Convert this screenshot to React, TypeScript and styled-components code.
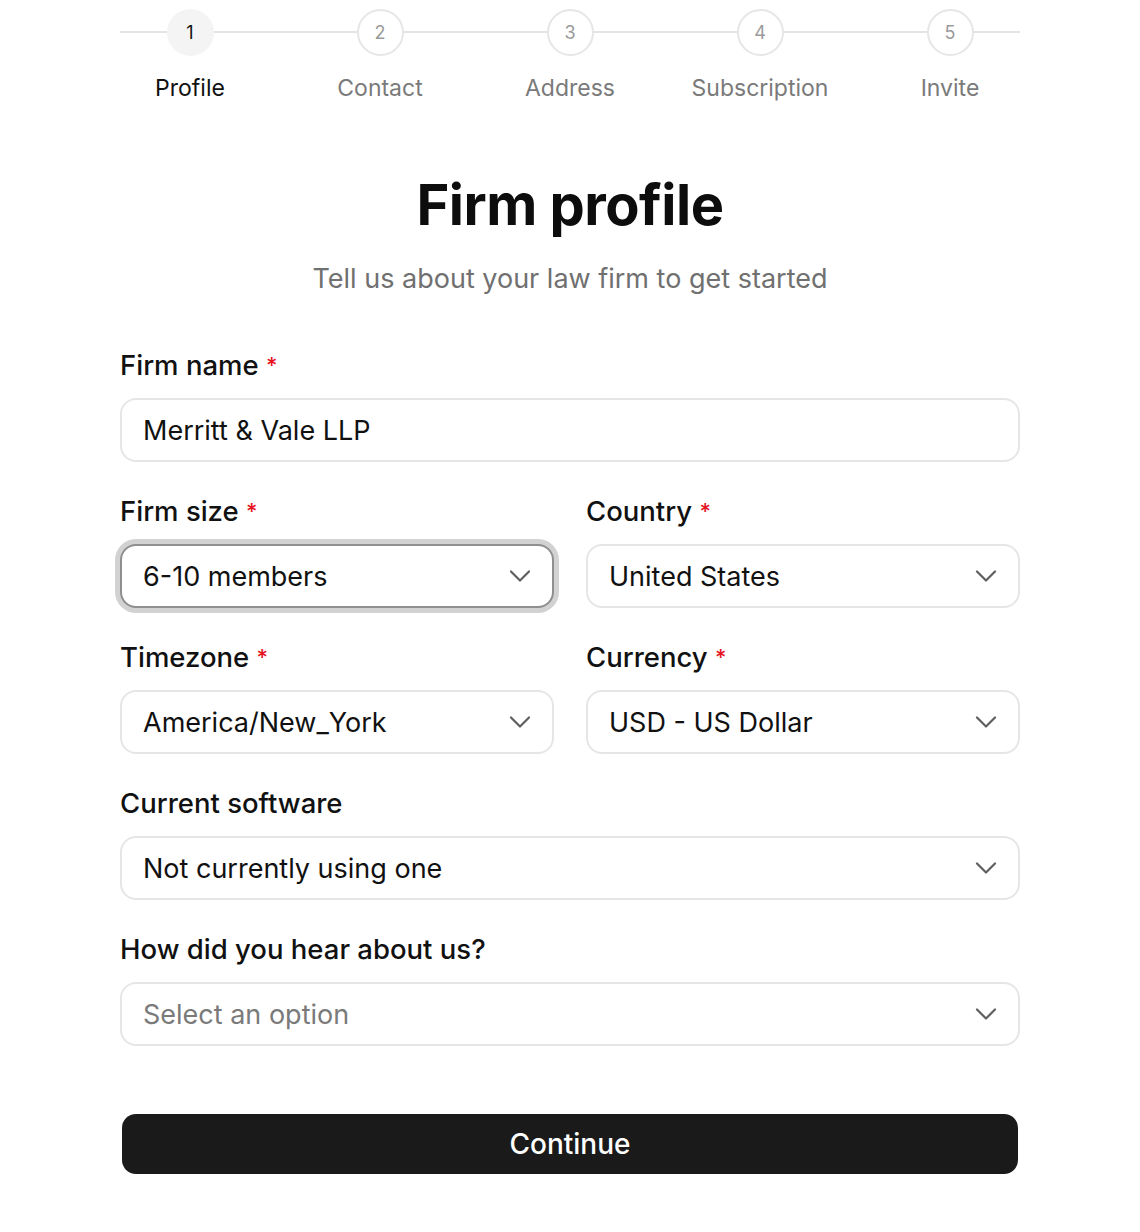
import React from 'react';
import styled, { createGlobalStyle } from 'styled-components';

const GlobalStyle = createGlobalStyle`
    body {
        margin: 0;
        background: #ffffff;
        font-family: Inter, "Noto Sans", sans-serif;
        color: #111111;
    }
`;

const steps = ['Profile', 'Contact', 'Address', 'Subscription', 'Invite'];

const Chevron = (): JSX.Element => (
    <svg width="22" height="12" viewBox="0 0 22 12" fill="none" stroke="#5f5f5f" strokeWidth="2.2" strokeLinecap="round" strokeLinejoin="round">
        <path d="M2 1.5l9 9 9-9" />
    </svg>
);

type SelectProps = { value: string; placeholder?: boolean; focused?: boolean };

const Select = ({ value, placeholder, focused }: SelectProps): JSX.Element => (
    <Field $focused={focused}>
        <FieldText $muted={placeholder}>{value}</FieldText>
        <Chevron />
    </Field>
);

const App = (): JSX.Element => {
    return (
        <>
            <GlobalStyle />
            <Page>
                <Stepper>
                    <Track />
                    {steps.map((label, i) => (
                        <Step key={label}>
                            <Circle $active={i === 0}>{i + 1}</Circle>
                            <StepLabel $active={i === 0}>{label}</StepLabel>
                        </Step>
                    ))}
                </Stepper>

                <Header>
                    <Title>Firm profile</Title>
                    <Subtitle>Tell us about your law firm to get started</Subtitle>
                </Header>

                <Form>
                    <Group>
                        <Label>Firm name <Req>*</Req></Label>
                        <Field>
                            <FieldText>Merritt &amp; Vale LLP</FieldText>
                        </Field>
                    </Group>

                    <Row>
                        <Group>
                            <Label>Firm size <Req>*</Req></Label>
                            <Select value="6-10 members" focused />
                        </Group>
                        <Group>
                            <Label>Country <Req>*</Req></Label>
                            <Select value="United States" />
                        </Group>
                    </Row>

                    <Row>
                        <Group>
                            <Label>Timezone <Req>*</Req></Label>
                            <Select value="America/New_York" />
                        </Group>
                        <Group>
                            <Label>Currency <Req>*</Req></Label>
                            <Select value="USD - US Dollar" />
                        </Group>
                    </Row>

                    <Group>
                        <Label>Current software</Label>
                        <Select value="Not currently using one" />
                    </Group>

                    <Group>
                        <Label>How did you hear about us?</Label>
                        <Select value="Select an option" placeholder />
                    </Group>
                </Form>

                <Button>Continue</Button>
            </Page>
        </>
    );
};

const Page = styled.div`
    width: 900px;
    margin: 0 auto;
    padding: 9px 0 58px;
`;

const Stepper = styled.div`
    position: relative;
    display: flex;
    justify-content: space-between;
`;

const Track = styled.div`
    position: absolute;
    left: 0;
    right: 0;
    top: 22px;
    height: 2px;
    background: #e4e4e4;
`;

const Step = styled.div`
    position: relative;
    width: 140px;
    display: flex;
    flex-direction: column;
    align-items: center;
    gap: 19px;
`;

const Circle = styled.div<{ $active?: boolean }>`
    width: 47px;
    height: 47px;
    box-sizing: border-box;
    border-radius: 50%;
    display: flex;
    align-items: center;
    justify-content: center;
    font-size: 18px;
    background: ${(p) => (p.$active ? '#f4f4f4' : '#ffffff')};
    border: 2px solid ${(p) => (p.$active ? '#f4f4f4' : '#e6e6e6')};
    color: ${(p) => (p.$active ? '#111' : '#9a9a9a')};
`;

const StepLabel = styled.div<{ $active?: boolean }>`
    font-size: 23px;
    line-height: 26px;
    color: ${(p) => (p.$active ? '#111' : '#7a7a7a')};
`;

const Header = styled.div`
    text-align: center;
    margin-top: 72px;
`;

const Title = styled.h1`
    margin: 0;
    font-size: 56px;
    line-height: 64px;
    font-weight: 700;
    letter-spacing: -0.5px;
    color: #0d0d0d;
`;

const Subtitle = styled.p`
    margin: 26px 0 0;
    font-size: 27px;
    line-height: 32px;
    color: #707070;
`;

const Form = styled.div`
    margin-top: 54px;
    display: flex;
    flex-direction: column;
    gap: 33px;
`;

const Row = styled.div`
    display: grid;
    grid-template-columns: 1fr 1fr;
    gap: 32px;
`;

const Group = styled.div`
    display: flex;
    flex-direction: column;
    gap: 17px;
`;

const Label = styled.label`
    font-size: 27.5px;
    line-height: 32px;
    font-weight: 500;
    color: #111;
`;

const Req = styled.span`
    color: #e5141f;
    font-size: 22px;
    vertical-align: top;
`;

const Field = styled.div<{ $focused?: boolean }>`
    height: 64px;
    box-sizing: border-box;
    display: flex;
    align-items: center;
    justify-content: space-between;
    padding: 0 21px 0 21px;
    border: 2px solid ${(p) => (p.$focused ? '#8f8f8f' : '#e6e6e6')};
    border-radius: 16px;
    background: #fff;
    box-shadow: ${(p) => (p.$focused ? '0 0 0 5px #d2d2d2' : 'none')};
`;

const FieldText = styled.span<{ $muted?: boolean }>`
    font-size: 27px;
    color: ${(p) => (p.$muted ? '#7a7a7a' : '#111')};
`;

const Button = styled.button`
    display: block;
    margin: 68px auto 0;
    width: 896px;
    height: 60px;
    border: none;
    border-radius: 14px;
    background: #1a1a1a;
    color: #fff;
    font-family: Inter, "Noto Sans", sans-serif;
    font-size: 28px;
    font-weight: 500;
`;

export default App;
